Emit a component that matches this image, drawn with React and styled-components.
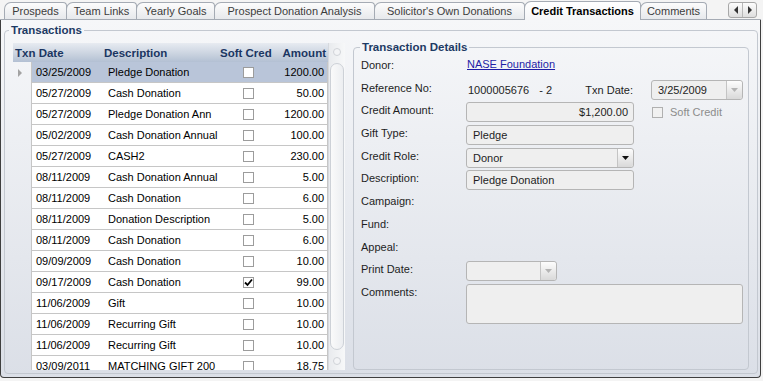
import React from 'react'
import styled, { createGlobalStyle } from 'styled-components'

const GlobalStyle = createGlobalStyle`
  html, body {
    margin: 0;
    padding: 0;
    background: #f4f4f4;
  }
  body {
    font-family: "Liberation Sans", Arial, sans-serif;
    font-size: 11px;
    color: #000;
  }
`

const Window = styled.div`
  width: 763px;
  height: 381px;
  display: flex;
  flex-direction: column;
  overflow: hidden;
  background: #f4f4f4;
`

const TabStrip = styled.div`
  box-sizing: border-box;
  height: 20px;
  flex: none;
  display: flex;
  align-items: flex-end;
  padding-left: 4px;
  border-bottom: 1px solid #a5abb4;
  margin-right: 2px;
`

const Tab = styled.div`
  box-sizing: border-box;
  flex: none;
  width: ${p => p.$width}px;
  height: ${p => (p.$active ? 19 : 17)}px;
  margin-right: -1px;
  margin-bottom: ${p => (p.$active ? -1 : 0)}px;
  border: 1px solid #a5abb4;
  border-bottom: none;
  border-radius: 7px 4px 0 0;
  background: ${p =>
    p.$active
      ? 'linear-gradient(#ffffff, #f4f5f7)'
      : 'linear-gradient(#fcfcfc, #e7e9ec)'};
  display: flex;
  align-items: center;
  justify-content: center;
  font-size: 11px;
  font-weight: ${p => (p.$active ? 'bold' : 'normal')};
  color: ${p => (p.$active ? '#000' : '#3c3c3c')};
  white-space: nowrap;
  position: relative;
  z-index: ${p => (p.$active ? 1 : 0)};
`

const TabScroll = styled.div`
  margin-left: auto;
  margin-right: 4px;
  align-self: center;
  display: flex;
  height: 14px;
  border: 1px solid #a8a8a8;
  border-radius: 3px;
  background: linear-gradient(#fdfdfd, #dedede);
  overflow: hidden;
`

const TabScrollButton = styled.div`
  width: 13px;
  display: flex;
  align-items: center;
  justify-content: center;
  & + & {
    border-left: 1px solid #b8b8b8;
  }
`

const Panel = styled.div`
  flex: 1;
  display: flex;
  flex-direction: column;
  min-height: 0;
  margin: 0 2px 3px 0;
  padding: 3px 2px 3px 3px;
  border: 1px solid #3f3f3f;
  border-top: none;
  border-radius: 0 0 4px 4px;
  background: linear-gradient(#f6f7f9, #dbdfe7);
`

const GroupBox = styled.fieldset`
  margin: 0;
  min-width: 0;
  min-height: 0;
  border: 1px solid #c3c8d0;
  border-radius: 4px;
  padding: ${p => p.$padding};
  flex: 1;
  display: flex;
  flex-direction: column;
  margin-left: ${p => p.$offset || 0}px;
`

const GroupTitle = styled.legend`
  padding: 0 2px;
  margin-left: ${p => p.$shift}px;
  font-size: 11.5px;
  font-weight: bold;
  line-height: 14px;
  color: #1d3a64;
`

const Split = styled.div`
  flex: 1;
  display: flex;
  min-height: 0;
`

const GridWrap = styled.div`
  flex: none;
  width: 332px;
  margin-top: 3px;
  display: flex;
  overflow: hidden;
`

const Grid = styled.div`
  width: 316px;
  display: flex;
  flex-direction: column;
  overflow: hidden;
`

const HeaderRow = styled.div`
  flex: none;
  height: 19px;
  display: grid;
  grid-template-columns: 89px 115px 63px 49px;
  align-items: center;
  background: linear-gradient(#e7ebf1, #c9d2df 60%, #b3c0d3);
  font-size: 11.5px;
  font-weight: bold;
  color: #1b3662;
`

const HeaderCell = styled.div`
  padding: 0 ${p => (p.$right ? 3 : 0)}px 0 ${p => p.$pad || 0}px;
  text-align: ${p => (p.$right ? 'right' : 'left')};
  white-space: nowrap;
`

const Row = styled.div`
  flex: none;
  height: 21px;
  display: grid;
  grid-template-columns: 18px 1fr;
`

const RowHeader = styled.div`
  display: flex;
  align-items: center;
  padding-left: 4px;
`

const RowCells = styled.div`
  box-sizing: border-box;
  display: grid;
  grid-template-columns: 72px 114px 58px 1fr;
  align-items: center;
  border: 1px solid #c6c6c6;
  border-top: none;
  background: ${p => (p.$selected ? '#b9c5d9' : '#ffffff')};
  white-space: nowrap;
`

const Cell = styled.div`
  padding: 0 ${p => (p.$right ? 3 : 0)}px 0 ${p => (p.$right ? 0 : 4)}px;
  text-align: ${p => (p.$right ? 'right' : 'left')};
  overflow: hidden;
`

const CheckCell = styled.div`
  display: flex;
  justify-content: center;
  padding-left: 2px;
`

const CheckBox = styled.div`
  box-sizing: border-box;
  width: 11px;
  height: 11px;
  border: 1px solid ${p => (p.$disabled ? '#b0b0b0' : '#9c9c9c')};
  background: ${p => (p.$disabled ? '#f1f1f1' : '#ffffff')};
  display: flex;
  align-items: center;
  justify-content: center;
`

const ScrollBar = styled.div`
  width: 16px;
  display: flex;
  flex-direction: column;
  background: linear-gradient(90deg, #e9ebee, #f7f8f9);
  border-left: 1px solid #d6d9de;
`

const ScrollEnd = styled.div`
  flex: none;
  height: 18px;
  display: flex;
  align-items: center;
  justify-content: center;
`

const ScrollDot = styled.div`
  width: 6px;
  height: 6px;
  border-radius: 50%;
  border: 1px solid #d0d3d8;
  background: #f3f4f6;
`

const ScrollThumb = styled.div`
  flex: 1;
  margin: 2px 1px;
  border: 1px solid #cdd1d7;
  border-radius: 7px;
  background: linear-gradient(90deg, #fafafa, #eceef1);
`

const Fields = styled.div`
  display: grid;
  grid-template-columns: 105px 168px 17px 92px;
  grid-template-rows: repeat(10, 20px) 40px;
  row-gap: 2.7px;
  padding-top: 1px;
  color: #1e1e1e;
  font-size: 11px;
`

const Label = styled.div`
  grid-column: 1;
  align-self: start;
  line-height: 17px;
  white-space: nowrap;
`

const LinkValue = styled.a`
  align-self: start;
  justify-self: start;
  line-height: 14px;
  color: #1e1ea6;
  text-decoration: underline;
  margin-left: 1px;
`

const RefValue = styled.div`
  display: flex;
  align-items: center;
  padding: 0 1px 0 2px;
  white-space: nowrap;
  span + span {
    margin-left: 10px;
  }
  em {
    font-style: normal;
    margin-left: auto;
  }
`

const Box = styled.div`
  box-sizing: border-box;
  grid-column: ${p => p.$span || 'auto'};
  display: flex;
  align-items: ${p => (p.$tall ? 'flex-start' : 'center')};
  justify-content: ${p => (p.$right ? 'flex-end' : 'flex-start')};
  height: 100%;
  padding: 0 ${p => (p.$right ? 5 : 0)}px 0 ${p => (p.$right ? 0 : 6)}px;
  border: 1px solid #b5b5b5;
  border-radius: 3px;
  background: #efefef;
  white-space: nowrap;
  overflow: hidden;
`

const Combo = styled(Box)`
  padding-right: 0;
  width: ${p => (p.$width ? `${p.$width}px` : 'auto')};
`

const ComboText = styled.div`
  flex: 1;
  padding-top: 1px;
`

const DropButton = styled.div`
  box-sizing: border-box;
  flex: none;
  width: 16px;
  height: 18px;
  display: flex;
  align-items: center;
  justify-content: center;
  border-left: 1px solid #c4c4c4;
  border-radius: 0 2px 2px 0;
  background: linear-gradient(#fdfdfd, #d9d9d9);
`

const CheckLine = styled.div`
  grid-column: 4;
  display: flex;
  align-items: center;
  gap: 7px;
  color: #8c8c8c;
  padding-left: 1px;
`

const Arrow = ({ dir, color }) => {
  const points = {
    left: '5,0 5,8 1,4',
    right: '1,0 1,8 5,4',
    down: '0,1 7,1 3.5,5',
  }[dir]
  const size = dir === 'down' ? [7, 6] : [6, 8]
  return (
    <svg width={size[0]} height={size[1]} viewBox={`0 0 ${size[0]} ${size[1]}`}>
      <polygon points={points} fill={color} />
    </svg>
  )
}

const Check = () => (
  <svg width="9" height="9" viewBox="0 0 9 9">
    <path d="M1 4.5 L3.5 7 L8 1.5" stroke="#000" strokeWidth="1.8" fill="none" />
  </svg>
)

const tabs = [
  { label: 'Prospeds', width: 63 },
  { label: 'Team Links', width: 71 },
  { label: 'Yearly Goals', width: 79 },
  { label: 'Prospect Donation Analysis', width: 161 },
  { label: "Solicitor's Own Donations", width: 151 },
  { label: 'Credit Transactions', width: 117, active: true },
  { label: 'Comments', width: 67 },
]

const rows = [
  ['03/25/2009', 'Pledge Donation', false, '1200.00'],
  ['05/27/2009', 'Cash Donation', false, '50.00'],
  ['05/27/2009', 'Pledge Donation Ann', false, '1200.00'],
  ['05/02/2009', 'Cash Donation Annual', false, '100.00'],
  ['05/27/2009', 'CASH2', false, '230.00'],
  ['08/11/2009', 'Cash Donation Annual', false, '5.00'],
  ['08/11/2009', 'Cash Donation', false, '6.00'],
  ['08/11/2009', 'Donation Description', false, '5.00'],
  ['08/11/2009', 'Cash Donation', false, '6.00'],
  ['09/09/2009', 'Cash Donation', false, '10.00'],
  ['09/17/2009', 'Cash Donation', true, '99.00'],
  ['11/06/2009', 'Gift', false, '10.00'],
  ['11/06/2009', 'Recurring Gift', false, '10.00'],
  ['11/06/2009', 'Recurring Gift', false, '10.00'],
  ['03/09/2011', 'MATCHING GIFT 200', false, '18.75'],
]

const TransactionGrid = () => (
  <GridWrap>
    <Grid>
      <HeaderRow>
        <HeaderCell $pad={2}>Txn Date</HeaderCell>
        <HeaderCell $pad={2}>Description</HeaderCell>
        <HeaderCell $pad={3}>Soft Cred</HeaderCell>
        <HeaderCell $right>Amount</HeaderCell>
      </HeaderRow>
      {rows.map(([date, desc, soft, amount], i) => (
        <Row key={i}>
          <RowHeader>{i === 0 && <Arrow dir="right" color="#a3a3a3" />}</RowHeader>
          <RowCells $selected={i === 0}>
            <Cell>{date}</Cell>
            <Cell>{desc}</Cell>
            <CheckCell>
              <CheckBox>{soft && <Check />}</CheckBox>
            </CheckCell>
            <Cell $right>{amount}</Cell>
          </RowCells>
        </Row>
      ))}
    </Grid>
    <ScrollBar>
      <ScrollEnd>
        <ScrollDot />
      </ScrollEnd>
      <ScrollThumb />
      <ScrollEnd>
        <ScrollDot />
      </ScrollEnd>
    </ScrollBar>
  </GridWrap>
)

const TransactionDetails = () => (
  <GroupBox $padding="2px 7px 0 7px" $offset={8}>
    <GroupTitle $shift={-1}>Transaction Details</GroupTitle>
    <Fields>
      <Label>Donor:</Label>
      <LinkValue href="#">NASE Foundation</LinkValue>
      <div />
      <div />

      <Label>Reference No:</Label>
      <RefValue>
        <span>1000005676</span>
        <span>- 2</span>
        <em>Txn Date:</em>
      </RefValue>
      <div />
      <Combo style={{ gridColumn: 4 }}>
        <ComboText>3/25/2009</ComboText>
        <DropButton>
          <Arrow dir="down" color="#b4b4b4" />
        </DropButton>
      </Combo>

      <Label>Credit Amount:</Label>
      <Box $right>$1,200.00</Box>
      <CheckLine>
        <CheckBox $disabled />
        Soft Credit
      </CheckLine>

      <Label>Gift Type:</Label>
      <Box>Pledge</Box>
      <div />
      <div />

      <Label>Credit Role:</Label>
      <Combo>
        <ComboText>Donor</ComboText>
        <DropButton>
          <Arrow dir="down" color="#111" />
        </DropButton>
      </Combo>
      <div />
      <div />

      <Label>Description:</Label>
      <Box>Pledge Donation</Box>
      <div />
      <div />

      <Label>Campaign:</Label>
      <div />
      <div />
      <div />

      <Label>Fund:</Label>
      <div />
      <div />
      <div />

      <Label>Appeal:</Label>
      <div />
      <div />
      <div />

      <Label>Print Date:</Label>
      <Combo $width={91}>
        <ComboText />
        <DropButton>
          <Arrow dir="down" color="#b4b4b4" />
        </DropButton>
      </Combo>
      <div />
      <div />

      <Label>Comments:</Label>
      <Box $span="2 / 5" $tall />
    </Fields>
  </GroupBox>
)

export default function App() {
  return (
    <Window>
      <GlobalStyle />
      <TabStrip>
        {tabs.map(t => (
          <Tab key={t.label} $width={t.width} $active={t.active}>
            {t.label}
          </Tab>
        ))}
        <TabScroll>
          <TabScrollButton>
            <Arrow dir="left" color="#333" />
          </TabScrollButton>
          <TabScrollButton>
            <Arrow dir="right" color="#333" />
          </TabScrollButton>
        </TabScroll>
      </TabStrip>
      <Panel>
        <GroupBox $padding="3px 8px 3px 8px">
          <GroupTitle $shift={-4}>Transactions</GroupTitle>
          <Split>
            <TransactionGrid />
            <TransactionDetails />
          </Split>
        </GroupBox>
      </Panel>
    </Window>
  )
}
